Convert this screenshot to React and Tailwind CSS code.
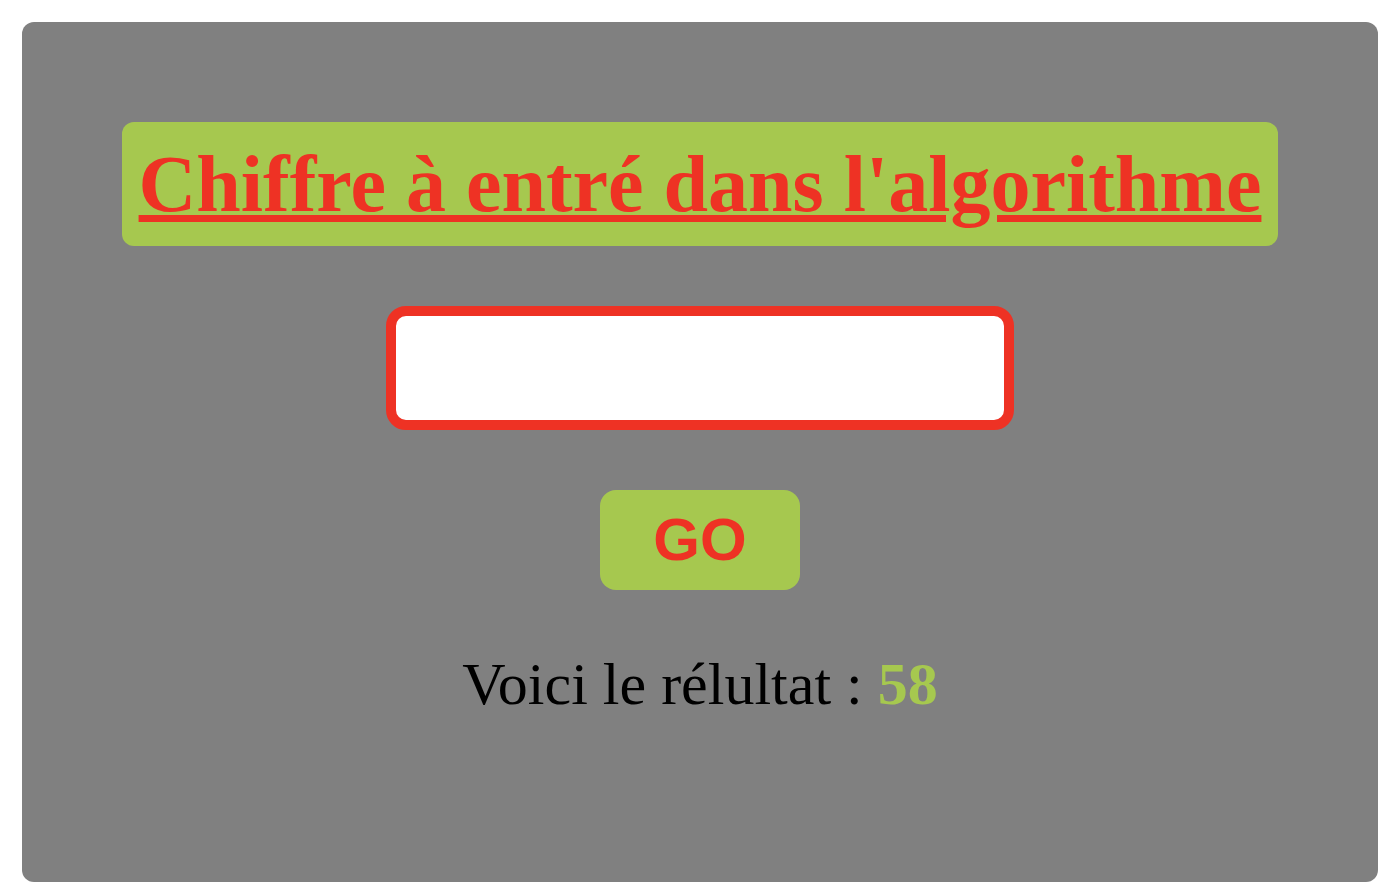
import React, { useState } from 'react';

const App = () => {
  const [value, setValue] = useState('');
  const result = 58;

  return (
    <div className="min-h-screen bg-white pt-[22px] pl-[22px]">
      {/* Card */}
      <div className="w-[1356px] h-[860px] bg-[#808080] rounded-[12px] px-[100px] pt-[100px] flex flex-col items-center gap-[60px]">
        <div className="w-full h-[124px] bg-[#a6c84f] rounded-[12px] flex items-center justify-center">
          <h1 className="font-['Liberation_Serif',serif] font-bold text-[80px] leading-[1.15] whitespace-nowrap text-[#ee3224] underline decoration-[7px] underline-offset-[4px]">
            Chiffre à entré dans l'algorithme
          </h1>
        </div>

        <input
          type="text"
          value={value}
          onChange={(e) => setValue(e.target.value)}
          className="w-[628px] h-[124px] bg-white border-[10px] border-[#ee3224] rounded-[20px] outline-none px-4 text-4xl"
        />

        <button className="w-[200px] h-[100px] bg-[#a6c84f] rounded-[16px] font-['Liberation_Sans',Arial,sans-serif] font-bold text-[60px] leading-none text-[#ee3224]">
          GO
        </button>

        <p className="font-['Liberation_Serif',serif] text-[60px] leading-[1.15] text-black">
          Voici le rélultat : <span className="font-bold text-[#a6c84f]">{result}</span>
        </p>
      </div>
    </div>
  );
};

export default App;
